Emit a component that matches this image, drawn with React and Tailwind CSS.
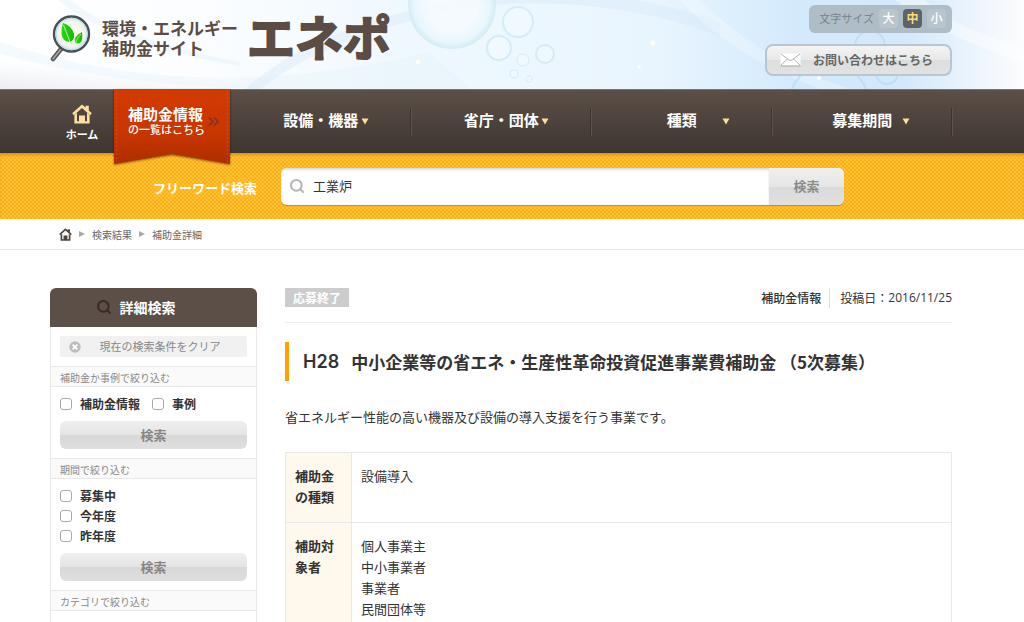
import React from 'react'
import { Search } from 'lucide-react'

const navItems = ['設備・機器', '省庁・団体', '種類', '募集期間']

const filters = [
  { title: '補助金か事例で絞り込む', options: ['補助金情報', '事例'], inline: true },
  { title: '期間で絞り込む', options: ['募集中', '今年度', '昨年度'] },
]

const rows = [
  { head: '補助金の種類', values: ['設備導入'] },
  { head: '補助対象者', values: ['個人事業主', '中小事業者', '事業者', '民間団体等'] },
]

const HomeIcon = ({ className }) => (
  <svg viewBox="0 0 20 20" className={className} fill="currentColor" aria-hidden="true">
    <path d="M10 0.4 L13.6 3.6 V1.8 H16.8 V6.5 L19.8 9.3 L18.2 11.2 L10 3.9 L1.8 11.2 L0.2 9.3 Z" />
    <path
      fillRule="evenodd"
      d="M2.4 11 L5 8.8 V17.2 H7 V11.4 H13 V17.2 H15 V8.8 L17.6 11 V19.6 H2.4 Z"
    />
  </svg>
)

const HeaderArt = () => (
  <svg
    className="absolute inset-0 h-full w-full"
    viewBox="0 0 1024 89"
    preserveAspectRatio="none"
    aria-hidden="true"
  >
    <defs>
      <linearGradient id="sky" x1="0" x2="1" y1="0" y2="0">
        <stop offset="0" stopColor="#fff" />
        <stop offset="0.2" stopColor="#fbfdff" />
        <stop offset="0.4" stopColor="#eff8fe" />
        <stop offset="0.64" stopColor="#e9f5fe" />
        <stop offset="0.78" stopColor="#d3eafc" />
        <stop offset="0.88" stopColor="#d3e8fb" />
        <stop offset="0.96" stopColor="#eff6fd" />
        <stop offset="1" stopColor="#fcfdfe" />
      </linearGradient>
      <linearGradient id="floor" x1="0" x2="0.35" y1="1" y2="0">
        <stop offset="0" stopColor="#e4e6e8" stopOpacity="0.7" />
        <stop offset="0.3" stopColor="#e9ecee" stopOpacity="0" />
      </linearGradient>
      <radialGradient id="bubble">
        <stop offset="0.6" stopColor="#f5fbff" stopOpacity="0.9" />
        <stop offset="0.85" stopColor="#e8f6fc" stopOpacity="0.8" />
        <stop offset="1" stopColor="#cde8f4" stopOpacity="0.8" />
      </radialGradient>
    </defs>
    <rect width="1024" height="89" fill="url(#sky)" />
    <rect width="300" height="89" fill="url(#floor)" />
    <path d="M0 42 Q200 108 430 52 L470 89 H250 Q110 84 0 54 Z" fill="#e3f0fa" opacity="0.35" />
    <path d="M70 0 Q120 40 240 62 L240 66 Q110 44 58 0 Z" fill="#e6f1fa" opacity="0.5" />
    <path d="M260 89 Q330 35 470 7 Q600 -8 720 36 L720 22 Q600 -20 470 -1 Q320 22 245 89 Z" fill="#d5e9f8" opacity="0.4" />
    <path d="M895 0 Q940 36 1024 62 V48 Q950 26 925 0 Z" fill="#fff" opacity="0.4" />
    <path d="M700 0 Q760 60 850 89 H820 Q730 55 680 0 Z" fill="#fff" opacity="0.25" />
    <circle cx="452" cy="5" r="44" fill="url(#bubble)" />
    <g fill="#f1f9fe" fillOpacity="0.7" stroke="#cbe7f2" strokeWidth="2" strokeOpacity="0.7">
      <circle cx="518" cy="22" r="15" />
      <circle cx="499" cy="48" r="12" />
      <circle cx="545" cy="54" r="9" />
      <circle cx="523" cy="60" r="6" strokeWidth="1" />
      <circle cx="514" cy="74" r="4" strokeWidth="1" />
      <circle cx="529" cy="79" r="3" strokeWidth="1" />
    </g>
    <g fill="none" stroke="#b3d9ee" strokeWidth="2" opacity="0.6">
      <circle cx="870" cy="46" r="15" />
      <circle cx="829" cy="104" r="40" />
      <circle cx="887" cy="73" r="11" />
    </g>
    <g fill="#fffdf5">
      <circle cx="418" cy="62" r="2.5" />
      <circle cx="653" cy="43" r="2.5" />
      <circle cx="639" cy="67" r="2" />
      <circle cx="819" cy="78" r="2" />
    </g>
  </svg>
)

const Logo = () => (
  <a href="#" className="flex items-center text-[#5b4d45]">
    <svg viewBox="0 0 42 48" className="h-12 w-[42px]" aria-hidden="true">
      <defs>
        <radialGradient id="lens">
          <stop offset="0" stopColor="#fffdf0" />
          <stop offset="0.7" stopColor="#f4f6ea" />
          <stop offset="1" stopColor="#c5e9f5" />
        </radialGradient>
        <linearGradient id="leaf" x1="0" x2="1">
          <stop offset="0" stopColor="#2fd411" />
          <stop offset="1" stopColor="#16b80c" />
        </linearGradient>
      </defs>
      <path d="M11 35 L3 45" stroke="#55585b" strokeWidth="4.5" strokeLinecap="round" />
      <path d="M11 35 L3 45" stroke="#a4a8ab" strokeWidth="1.5" strokeLinecap="round" />
      <circle cx="21.5" cy="20" r="17.5" fill="url(#lens)" stroke="#4c5053" strokeWidth="2.4" />
      <circle cx="21.5" cy="20" r="15.8" fill="none" stroke="#b3dbe9" strokeWidth="1" />
      <path d="M13 9 Q22 12 24 20 Q25 26 20 28 Q12 27 11.5 20 Q11 14 13 9Z" fill="url(#leaf)" />
      <path d="M13.5 11 Q17 20 20 28 L22 30" stroke="#b4f59d" strokeWidth="1" fill="none" />
      <path d="M32 18 Q33 25 31 28 Q28 31 25 28 Q23 23 32 18Z" fill="url(#leaf)" />
      <path d="M31 20 Q27 24 25 30" stroke="#b4f59d" strokeWidth="0.8" fill="none" />
    </svg>
    <span className="ml-2.5 text-[17px] leading-5 font-bold">
      <span className="block">環境・エネルギー</span>
      <span className="block">補助金サイト</span>
    </span>
    <svg viewBox="0 0 150 76" className="ml-2 h-[76px] w-[150px]" role="img" aria-label="エネポ">
      <text
        x="1"
        y="56"
        fontSize="48"
        fontWeight="700"
        fill="currentColor"
        stroke="currentColor"
        strokeWidth="2"
        strokeLinejoin="round"
      >
        エネポ
      </text>
    </svg>
  </a>
)

const Header = () => (
  <header className="relative flex h-[89px] justify-between pr-[72px] pl-[50px]">
    <HeaderArt />
    <div className="relative">
      <Logo />
    </div>
    <div className="relative flex flex-col items-end gap-[11px] pt-[5px]">
      <div className="flex h-7 items-center gap-[5px] rounded-md bg-[#aebdc6] px-1.5 pb-0.5 text-[11px] text-[#77858e]">
        <span className="ml-1">文字サイズ</span>
        <button className="h-[19px] w-[19px] rounded bg-[#b9c5cd] text-xs font-medium text-white">大</button>
        <button className="h-[19px] w-[19px] rounded bg-[#5b6469] text-xs font-bold text-[#ffd778]">中</button>
        <button className="h-[19px] w-[19px] rounded bg-[#b9c5cd] text-xs font-medium text-white">小</button>
      </div>
      <a
        href="#"
        className="flex h-8 items-center gap-3 rounded-lg border-2 border-[#b9c6d1] bg-[linear-gradient(#f4f4f4,#e8e8e8_50%,#dcdddd_50%,#e2e2e2)] pr-[17px] pl-[13px] text-xs font-bold text-[#666]"
      >
        <svg viewBox="0 0 21 14" className="h-3.5 w-[21px]" aria-hidden="true">
          <rect x="0.5" y="0.5" width="20" height="12" fill="#fff" />
          <path
            d="M1 1 L9 7 Q10.5 8 12 7 L20 1 M1 12 L7.5 6 M20 12 L13.5 6 M0.5 13 H20.5"
            fill="none"
            stroke="#a5a5a5"
            strokeWidth="0.9"
          />
        </svg>
        お問い合わせはこちら
      </a>
    </div>
  </header>
)

const Nav = () => (
  <nav className="relative z-10 flex h-16 border-t border-[#7b736e] bg-linear-to-b from-[#5b4f48] to-[#3f3631] pr-[72px] pl-[50px] text-white">
    <a href="#" className="flex w-16 flex-col items-center pt-[14px] text-[11px] leading-5 font-bold">
      <HomeIcon className="h-5 w-5 text-[#ffe0a3]" />
      ホーム
    </a>
    <a href="#" className="relative w-[116px] shrink-0 pt-[15px] pl-[14px] font-bold">
      <svg
        viewBox="0 0 116 76"
        className="absolute -top-px left-0 h-[76px] w-full drop-shadow-[0_1px_1px_rgba(0,0,0,0.5)]"
        aria-hidden="true"
      >
        <defs>
          <linearGradient id="ribbon" x1="0" x2="0" y1="0" y2="1">
            <stop offset="0" stopColor="#d33a00" />
            <stop offset="0.6" stopColor="#c83600" />
            <stop offset="1" stopColor="#ad2d00" />
          </linearGradient>
        </defs>
        <path d="M0 0 H116 V75 L58 65 L0 75 Z" fill="url(#ribbon)" />
        <path d="M2.5 0 V73 M113.5 0 V73" stroke="#d9531a" strokeDasharray="2 2" strokeOpacity="0.6" />
        <path d="M95 28.5 L99 32.5 L95 36.5 M100 28.5 L104 32.5 L100 36.5" fill="none" stroke="#7c3329" strokeWidth="1.6" />
      </svg>
      <span className="relative block text-[15px] leading-[18px]">補助金情報</span>
      <span className="relative block text-[11px] leading-3 font-medium">の一覧はこちら</span>
    </a>
    <ul className="grid flex-1 grid-cols-4">
      {navItems.map((item) => (
        <li key={item} className="flex items-center">
          <a href="#" className="flex flex-1 items-center justify-center pb-0.5 pl-2.5 text-[15px] font-bold">
            <span className="w-20 text-center">{item}</span>
            <svg viewBox="0 0 8 7" className="mt-0.5 h-[7px] w-2" aria-hidden="true">
              <path d="M0.5 0.5 H7.5 L4 6.5 Z" fill="#ffdc9b" />
            </svg>
          </a>
          <span className="h-7 w-px bg-[#3b332f] shadow-[1px_0_0_#5f544d]" />
        </li>
      ))}
    </ul>
  </nav>
)

const SearchBar = () => (
  <form
    className="flex h-[66px] items-center gap-6 bg-[#ffb20e] bg-[radial-gradient(circle_at_1px_1px,#ffc040_1px,transparent_1px),radial-gradient(circle_at_3px_3px,#ffc040_1px,transparent_1px)] bg-[length:4px_4px] pr-[72px] pl-[50px] shadow-[inset_0_3px_3px_-1px_rgba(120,80,0,0.35)]"
    onSubmit={(e) => e.preventDefault()}
  >
    <label htmlFor="keyword" className="w-[207px] shrink-0 pt-1 text-right text-[13px] font-bold text-white">
      フリーワード検索
    </label>
    <div className="flex h-[37px] max-w-[563px] flex-1 overflow-hidden rounded-md bg-white shadow-[0_1px_1px_#c98c08]">
      <div className="flex flex-1 items-center gap-2 pl-2 shadow-[inset_0_2px_2px_#ddd]">
        <Search className="h-4 w-4 text-[#b5b5b5]" strokeWidth={3} />
        <input
          id="keyword"
          type="text"
          defaultValue="工業炉"
          className="min-w-0 flex-1 bg-transparent text-[13px] text-[#333] outline-none"
        />
      </div>
      <button className="w-[75px] bg-[linear-gradient(#efefef,#e6e6e6_50%,#dadada_50%,#e0e0e0)] text-[13px] font-bold text-[#8b8b8b]">
        検索
      </button>
    </div>
  </form>
)

const Crumb = ({ children }) => (
  <>
    <svg viewBox="0 0 6 6" className="h-1.5 w-1.5" aria-hidden="true">
      <path d="M0 0 L6 3 L0 6 Z" fill="#aaa" />
    </svg>
    <a href="#">{children}</a>
  </>
)

const Sidebar = () => (
  <aside className="w-[207px] shrink-0">
    <h2 className="flex h-[39px] items-center justify-center gap-2 rounded-t-md bg-[#5b4f48] pr-9 pb-0.5 text-sm font-bold text-white">
      <Search className="h-4 w-4 text-[#3b2a21]" strokeWidth={3} />
      詳細検索
    </h2>
    <div className="border-x border-[#e8e8e8]">
      <div className="px-[9px] py-[9px]">
        <button className="flex h-[21px] w-full items-center rounded-xs bg-[#f1f1f1] pr-2 pl-[9px] text-[11px] text-[#888]">
          <svg viewBox="0 0 12 12" className="h-3 w-3" aria-hidden="true">
            <circle cx="6" cy="6" r="5.7" fill="#bdbdbd" />
            <path d="M3.7 3.7 L8.3 8.3 M8.3 3.7 L3.7 8.3" stroke="#fff" strokeWidth="1.8" />
          </svg>
          <span className="flex-1 text-center">現在の検索条件をクリア</span>
        </button>
      </div>
      {filters.map((f) => (
        <section key={f.title}>
          <h3 className="border-y border-[#e8e8e8] bg-[#fafafa] px-[9px] pt-[3px] pb-px text-[10px] leading-[15px] text-[#888]">
            {f.title}
          </h3>
          <div className="px-[9px] pt-[7px] pb-[9px]">
            <div className={f.inline ? 'flex gap-3' : ''}>
              {f.options.map((o) => (
                <label key={o} className="flex h-5 items-center gap-2 text-xs font-bold text-[#333]">
                  <input type="checkbox" className="h-3 w-3 appearance-none rounded-[3px] border border-[#aaa] bg-white" />
                  {o}
                </label>
              ))}
            </div>
            <button className="mt-[7px] h-7 w-full rounded-md bg-[linear-gradient(#efefef,#e4e4e4_50%,#d8d8d8_50%,#dfdfdf)] text-[13px] font-bold text-[#858585]">
              検索
            </button>
          </div>
        </section>
      ))}
      <section>
        <h3 className="border-y border-[#e8e8e8] bg-[#fafafa] px-[9px] pt-[3px] pb-px text-[10px] leading-[15px] text-[#888]">
          カテゴリで絞り込む
        </h3>
        <div className="h-3" />
      </section>
    </div>
  </aside>
)

const Article = () => (
  <main className="min-w-0 flex-1 text-[#333]">
    <div className="flex items-start justify-between border-b border-[#eee] pb-[14px] text-xs">
      <span className="bg-[#ccc] px-2 leading-[19px] font-bold text-white">応募終了</span>
      <div className="flex h-5 items-center leading-5">
        <span className="border-r border-[#ddd] pr-2 font-medium">補助金情報</span>
        <span className="flex pl-2.5">
          投稿日：<time className="font-['Open_Sans']">2016/11/25</time>
        </span>
      </div>
    </div>
    <h1 className="mt-[19px] flex h-[39px] items-center border-l-4 border-[#ffa200] pl-3.5 text-[17px] font-bold">
      <span className="mr-3 font-['Inter'] text-lg font-semibold">H28</span>
      <span>中小企業等の省エネ・生産性革命投資促進事業費補助金 （5次募集）</span>
    </h1>
    <p className="mt-[26px] text-[13px] leading-5">
      省エネルギー性能の高い機器及び設備の導入支援を行う事業です。
    </p>
    <table className="mt-[25px] w-full border-collapse text-[13px] leading-[21px]">
      <tbody>
        {rows.map((row) => (
          <tr key={row.head} className="align-top">
            <th className="w-[66px] border border-[#e8e8e8] bg-[#fff8ec] px-[9px] pt-3 pb-[15px] text-left font-bold">
              {row.head}
            </th>
            <td className="border border-[#e8e8e8] px-[9px] pt-3 pb-[15px]">
              {row.values.map((v) => (
                <div key={v}>{v}</div>
              ))}
            </td>
          </tr>
        ))}
      </tbody>
    </table>
  </main>
)

export default function App() {
  return (
    <div lang="ja" className="min-h-screen bg-white font-['Noto_Sans_CJK_JP',sans-serif]">
      <Header />
      <Nav />
      <SearchBar />
      <div className="flex h-[31px] items-center gap-[7px] border-b border-[#e5e5e5] pl-[59px] text-[10px] text-[#666]">
        <a href="#" aria-label="ホーム">
          <HomeIcon className="h-[13px] w-[13px] text-[#4f443e]" />
        </a>
        <Crumb>検索結果</Crumb>
        <Crumb>補助金詳細</Crumb>
      </div>
      <div className="flex gap-7 pt-[38px] pr-[72px] pl-[50px]">
        <Sidebar />
        <Article />
      </div>
    </div>
  )
}
